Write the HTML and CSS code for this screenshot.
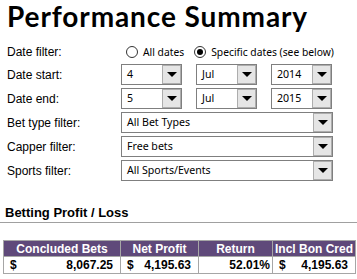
FILE: index.html
```html
<!DOCTYPE html>
<html lang="en">
  <head>
    <meta charset="UTF-8" />
    <title>Performance Summary</title>
    <link rel="stylesheet" href="styles.css">
  </head>
  <body>
    <h1 class="title">Performance Summary</h1>

    <div class="filters">
      <div class="row radio-row">
        <span class="label">Date filter:</span>
        <span class="radio"></span>
        <span class="radio-text">All dates</span>
        <span class="radio checked"></span>
        <span class="radio-text">Specific dates (see below)</span>
      </div>

      <div class="row">
        <span class="label">Date start:</span>
        <div class="combos">
          <div class="combo small"><span class="value">4</span><span class="arrow"></span></div>
          <div class="combo small"><span class="value">Jul</span><span class="arrow"></span></div>
          <div class="combo small"><span class="value">2014</span><span class="arrow"></span></div>
        </div>
      </div>

      <div class="row">
        <span class="label">Date end:</span>
        <div class="combos">
          <div class="combo small"><span class="value">5</span><span class="arrow"></span></div>
          <div class="combo small"><span class="value">Jul</span><span class="arrow"></span></div>
          <div class="combo small"><span class="value">2015</span><span class="arrow"></span></div>
        </div>
      </div>

      <div class="row">
        <span class="label">Bet type filter:</span>
        <div class="combo wide"><span class="value">All Bet Types</span><span class="arrow"></span></div>
      </div>

      <div class="row">
        <span class="label">Capper filter:</span>
        <div class="combo wide"><span class="value">Free bets</span><span class="arrow"></span></div>
      </div>

      <div class="row">
        <span class="label">Sports filter:</span>
        <div class="combo wide"><span class="value">All Sports/Events</span><span class="arrow"></span></div>
      </div>
    </div>

    <h2 class="section">Betting Profit / Loss</h2>

    <table class="summary">
      <colgroup>
        <col class="c1">
        <col class="c2">
        <col class="c3">
        <col class="c4">
      </colgroup>
      <tr>
        <th>Concluded Bets</th>
        <th>Net Profit</th>
        <th>Return</th>
        <th>Incl Bon Cred</th>
      </tr>
      <tr>
        <td><div class="money"><span>$</span><span>8,067.25</span></div></td>
        <td><div class="money"><span>$</span><span>4,195.63</span></div></td>
        <td class="pct">52.01%</td>
        <td><div class="money"><span>$</span><span>4,195.63</span></div></td>
      </tr>
    </table>
  </body>
</html>
```

FILE: styles.css
```css
body {
  margin: 0;
  padding: 0;
  background: #ffffff;
  font-family: "Liberation Sans", Arial, sans-serif;
  color: #000;
}

.title {
  margin: 0 0 8px 0;
  padding-left: 7px;
  font-family: Lato, "DejaVu Sans", sans-serif;
  font-weight: 700;
  font-size: 28px;
  line-height: 32px;
  letter-spacing: 0.9px;
  white-space: nowrap;
}

.filters {
  padding-left: 7px;
}

.row {
  display: flex;
  align-items: center;
  height: 21px;
  margin-bottom: 3px;
}

.radio-row {
  height: 24px;
  margin-bottom: 0;
}

.label {
  width: 114px;
  font-size: 12px;
  flex-shrink: 0;
}

.radio {
  width: 12px;
  height: 12px;
  box-sizing: border-box;
  border: 1px solid #333;
  border-radius: 50%;
  background: #fff;
  margin-left: 5px;
  position: relative;
}

.radio + .radio-text + .radio {
  margin-left: 10px;
}

.radio.checked::after {
  content: "";
  position: absolute;
  left: 2px;
  top: 2px;
  width: 6px;
  height: 6px;
  border-radius: 50%;
  background: #000;
}

.radio-text {
  margin-left: 5px;
  font-family: "Noto Sans", sans-serif;
  font-size: 10.3px;
}

.combos {
  display: flex;
  gap: 14px;
}

.combo {
  display: flex;
  height: 21px;
  box-sizing: border-box;
  border: 1px solid #7f7f7f;
  background: #fff;
}

.combo.small {
  width: 61px;
}

.combo.wide {
  width: 212px;
}

.value {
  flex: 1;
  padding-left: 5px;
  font-family: "Noto Sans", sans-serif;
  font-size: 10.6px;
  line-height: 19px;
  white-space: nowrap;
  overflow: hidden;
}

.arrow {
  width: 19px;
  box-sizing: border-box;
  border: 1px solid #adadad;
  background: #e5e5e5;
  display: flex;
  align-items: center;
  justify-content: center;
}

.arrow::after {
  content: "";
  border-left: 5px solid transparent;
  border-right: 5px solid transparent;
  border-top: 5px solid #000;
}

.section {
  margin: 24px 0 0 0;
  padding: 0 0 2px 5px;
  font-size: 13px;
  line-height: 15px;
  font-weight: bold;
  border-bottom: 1px solid #a0a0a0;
}

.summary {
  margin: 17px 0 0 3px;
  width: 352px;
  table-layout: fixed;
  border-collapse: collapse;
  font-size: 12px;
  font-weight: bold;
  white-space: nowrap;
}

.summary th {
  background: #5f497a;
  color: #fff;
  height: 15px;
  padding: 0;
  line-height: 14px;
  border: 1px solid #a6a6a6;
  text-align: center;
}

.summary td {
  height: 16px;
  padding: 0;
  line-height: 15px;
  border: 1px solid #a6a6a6;
}

.c1 { width: 117px; }
.c2 { width: 78px; }
.c3 { width: 74px; }
.c4 { width: 83px; }

.money {
  display: flex;
  justify-content: space-between;
  padding: 0 7px 0 6px;
}

.pct {
  text-align: right;
  padding-right: 2px !important;
}
```
